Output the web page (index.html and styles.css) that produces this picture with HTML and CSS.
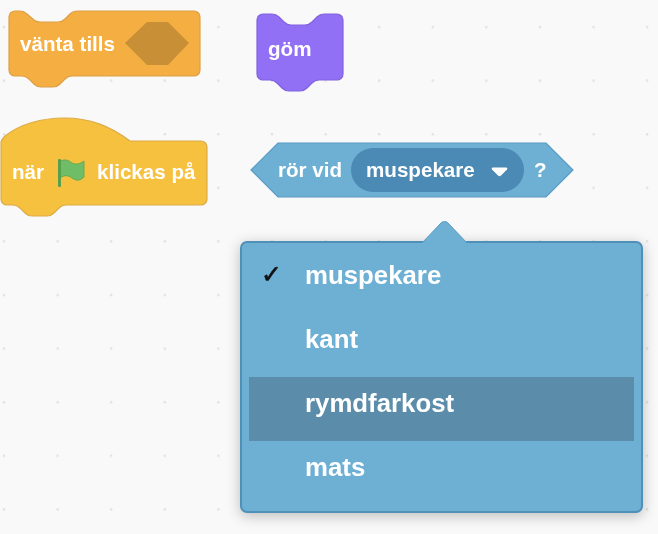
FILE: index.html
```html
<!DOCTYPE html>
<html lang="sv">
<head>
  <meta charset="UTF-8">
  <meta name="viewport" content="width=device-width, initial-scale=1">
  <title>Block</title>
  <link rel="stylesheet" href="styles.css">
</head>
<body>
  <main class="canvas">
    <!-- vänta tills -->
    <svg class="block block-wait" width="194" height="78" viewBox="0 0 194 78">
      <path class="wait-shape" d="M1 7a6 6 0 0 1 6-6h5Q16 1 19 4L26 10Q28 12 33 12H50Q54 12 57 9L62 4Q65 1 70 1H186a6 6 0 0 1 6 6V60a6 6 0 0 1-6 6H64Q60 66 57 69L52 74Q49 77 45 77H33Q29 77 26 74L21 69Q18 66 14 66H7a6 6 0 0 1-6-6Z"/>
      <polygon class="wait-slot" points="117,33 139,12 160,12 181,33 160,55 139,55"/>
      <text class="block-text" x="12" y="41">vänta tills</text>
    </svg>

    <!-- göm -->
    <svg class="block block-hide" width="88" height="79" viewBox="0 0 88 79">
      <path class="hide-shape" d="M1 7a6 6 0 0 1 6-6h9Q20 1 23 4L28 9Q31 12 35 12H49Q53 12 56 9L61 4Q64 1 68 1H81a6 6 0 0 1 6 6V61a6 6 0 0 1-6 6H63Q59 67 56 70L51 75Q48 78 44 78H33Q29 78 26 75L21 70Q18 67 14 67H7a6 6 0 0 1-6-6Z"/>
      <text class="block-text" x="12" y="43">göm</text>
    </svg>

    <!-- när flaggan klickas på -->
    <svg class="block block-hat" width="210" height="101" viewBox="0 0 210 101">
      <path class="hat-shape" d="M1 26Q2 23 5 20C20 8 42 2 64 2C90 2 110 10 130 25H201a6 6 0 0 1 6 6V83a6 6 0 0 1-6 6H66Q62 89 59 92L54 97Q51 100 47 100H32Q28 100 25 97L20 92Q17 89 13 89H7a6 6 0 0 1-6-6Z"/>
      <text class="block-text" x="12" y="63">när</text>
      <path class="flag-fill" d="M60 45C66 43 68 44 72 47C76 49 80 48 84 45V61C80 65 76 65 72 62C68 59 64 59 60 62Z"/>
      <rect class="flag-pole" x="58" y="43" width="3" height="28" rx="1"/>
      <text class="block-text" x="97" y="63">klickas på</text>
    </svg>

    <!-- rör vid -->
    <svg class="block block-touch" width="326" height="56" viewBox="0 0 326 56">
      <polygon class="touch-shape" points="1,28 28,1 296,1 323,28 296,55 28,55"/>
      <rect class="touch-pill" x="101" y="6" width="173" height="44" rx="22"/>
      <text class="block-text" x="28" y="35">rör vid</text>
      <text class="block-text" x="116" y="35">muspekare</text>
      <path class="touch-caret" d="M243 25.5H256Q258 25.5 257 27.5L251 33.5Q249.5 35 248 33.5L242 27.5Q241 25.5 243 25.5Z"/>
      <text class="block-text" x="284" y="35">?</text>
    </svg>

    <!-- rullgardinsmeny -->
    <div class="menu">
      <svg class="menu-arrow" width="48" height="24" viewBox="0 0 48 24">
        <path class="arrow-shape" d="M1 23L20 3a5 5 0 0 1 7 0L46 23"/>
      </svg>
      <ul class="menu-list">
        <li class="menu-item"><span class="menu-check">✓</span>muspekare</li>
        <li class="menu-item">kant</li>
        <li class="menu-item menu-item-hover">rymdfarkost</li>
        <li class="menu-item">mats</li>
      </ul>
    </div>
  </main>
</body>
</html>
```

FILE: styles.css
```css
html, body {
  margin: 0;
  height: 100%;
  overflow: hidden;
}

body {
  font-family: 'Liberation Sans', Arial, sans-serif;
  background-color: #f9f9f9;
}

.canvas {
  position: relative;
  width: 658px;
  height: 534px;
  background-image: radial-gradient(circle at 4px 27px, #e2e2e2 0, #e2e2e2 1px, transparent 1.7px);
  background-size: 53.6px 53.6px;
  overflow: hidden;
}

.block {
  position: absolute;
  display: block;
  overflow: visible;
  filter: blur(0.3px);
}

.block-wait { left: 8px; top: 10px; }
.block-hide { left: 256px; top: 13px; }
.block-hat { left: 0; top: 116px; }
.block-touch { left: 250px; top: 142px; }

.block-text {
  font-size: 20.6px;
  font-weight: 700;
  fill: #fff;
}

.wait-shape { fill: #f5ae42; stroke: #dc9f45; stroke-width: 1.2; }
.wait-slot { fill: #c88f37; }
.hide-shape { fill: #9170f5; stroke: #8162dd; stroke-width: 1.2; }
.hat-shape { fill: #f6c13f; stroke: #dcac48; stroke-width: 1.2; }
.flag-fill { fill: #6fbd66; stroke: #5aa350; stroke-width: 0.8; }
.flag-pole { fill: #58a04e; }
.touch-shape { fill: #6eafd4; stroke: #5a9cc4; stroke-width: 1.2; }
.touch-pill { fill: #4a8ab4; }
.touch-caret { fill: #fff; }

.menu {
  position: absolute;
  left: 240px;
  top: 241px;
  width: 403px;
  height: 272px;
  box-sizing: border-box;
  padding: 6px 7px;
  background-color: #6eafd4;
  border: 2px solid #4f90b9;
  border-radius: 7px;
  box-shadow: 0 3px 14px rgba(0, 0, 0, 0.25);
}

.menu-arrow {
  position: absolute;
  left: 179px;
  top: -23px;
  display: block;
}

.arrow-shape { fill: #6eafd4; stroke: #5a9cc4; stroke-width: 1; }

.menu-list {
  list-style: none;
  margin: 0;
  padding: 0;
}

.menu-item {
  position: relative;
  height: 64px;
  padding-left: 56px;
  color: #fff;
  font-size: 25.8px;
  font-weight: 700;
  line-height: 52px;
  filter: blur(0.3px);
}

.menu-item-hover {
  background-color: #5b8daa;
}

.menu-check {
  position: absolute;
  left: 12px;
  top: 0;
  color: #111;
  font-family: 'DejaVu Sans', sans-serif;
  font-size: 25px;
  font-style: italic;
  -webkit-text-stroke: 0.6px #111;
}
```
